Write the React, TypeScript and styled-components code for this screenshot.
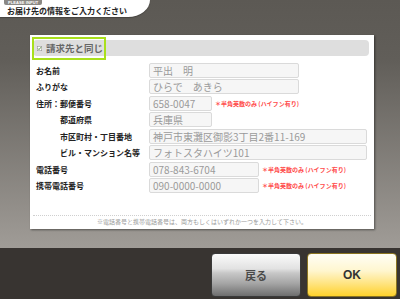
import * as React from "react";
import styled, { createGlobalStyle } from "styled-components";

const GlobalStyle = createGlobalStyle`
  html, body {
    margin: 0;
    padding: 0;
    background: #383431;
  }
  * {
    box-sizing: border-box;
  }
`;

const jp = `"Noto Sans CJK JP", "Noto Sans", "DejaVu Sans", sans-serif`;

const Screen = styled.div`
  width: 400px;
  height: 299px;
  overflow: hidden;
  display: flex;
  flex-direction: column;
  font-family: ${jp};
  background: linear-gradient(to bottom, #5c5954 0px, #615e59 60px, #a09c97 248px, #a09c97 100%);
`;

const Header = styled.div`
  height: 17px;
  display: flex;
`;

const Tab = styled.div`
  width: 150px;
  height: 17px;
  background: #fff;
  border-bottom-right-radius: 22px 17px;
  padding-left: 7px;
  display: flex;
  flex-direction: column;
  box-shadow: 0 1px 1px rgba(0, 0, 0, 0.25);
`;

const Tag = styled.div`
  align-self: flex-start;
  height: 5px;
  padding: 0 4px;
  margin-left: -3px;
  background: #8a8884;
  border-radius: 0 0 2px 2px;
  color: #fff;
  font-size: 4px;
  line-height: 5px;
  font-weight: 700;
  font-family: "Liberation Sans", sans-serif;
  letter-spacing: 0.1px;
`;

const Title = styled.div`
  font-size: 8px;
  line-height: 10px;
  font-weight: 700;
  color: #222;
  margin-top: 1px;
`;

const Main = styled.div`
  flex: 1;
  padding: 18px 26px 19px 30px;
  display: flex;
`;

const Panel = styled.div`
  flex: 1;
  background: #fff;
  display: flex;
  flex-direction: column;
  box-shadow: 1px 1px 2px rgba(0, 0, 0, 0.45);
`;

const SameBar = styled.div`
  margin: 5px 5px 0 3px;
  height: 16px;
  background: #dedede;
  border-radius: 4px;
  padding-left: 2px;
  display: flex;
  align-items: center;
`;

const SameLabel = styled.label`
  width: 68px;
  height: 17px;
  display: flex;
  align-items: center;
  gap: 4px;
  padding-left: 2px;
  outline: 2px solid #a9e01c;
  outline-offset: 1px;
  color: #666;
  font-size: 9.5px;
  font-weight: 700;
`;

const Form = styled.div`
  margin-top: 7px;
  padding-left: 6px;
  display: flex;
  flex-direction: column;
  gap: 1.43px;
`;

const Row = styled.div`
  height: 15px;
  display: flex;
  align-items: center;
`;

const Label = styled.div<{ $indent?: boolean }>`
  width: 113px;
  padding-left: ${(p) => (p.$indent ? "24px" : "0")};
  font-size: 8px;
  font-weight: 700;
  color: #222;
  white-space: nowrap;
`;

const Field = styled.div<{ $w: number }>`
  width: ${(p) => p.$w}px;
  height: 15px;
  border: 1px solid #dadada;
  background: #f6f6f6;
  border-radius: 2px;
  padding-left: 3px;
  font-size: 10px;
  line-height: 13px;
  color: #9a9a9a;
  white-space: nowrap;
  overflow: hidden;
`;

const Hint = styled.div`
  margin-left: 3px;
  font-size: 6px;
  font-weight: 700;
  color: #ff4b4b;
  white-space: nowrap;
`;

const Footer = styled.div`
  margin: auto 3px 0;
  border-top: 1px dotted #cfcfcf;
  padding: 1px 0 3px;
  text-align: center;
  font-size: 6px;
  line-height: 9px;
  color: #9a9a9a;
`;

const BottomBar = styled.div`
  height: 51px;
  background: #383431;
  display: flex;
  justify-content: flex-end;
  gap: 6px;
  padding: 5px 3px 0 0;
`;

const Button = styled.div<{ $primary?: boolean }>`
  width: 90px;
  height: 44px;
  border-radius: 4px;
  border: 1px solid ${(p) => (p.$primary ? "#8a7420" : "#3a3a3a")};
  display: flex;
  align-items: center;
  justify-content: center;
  font-weight: 700;
  font-size: ${(p) => (p.$primary ? "12px" : "11px")};
  font-family: ${(p) => (p.$primary ? `"Liberation Sans", sans-serif` : jp)};
  color: ${(p) => (p.$primary ? "#333" : "#4a4a4a")};
  background: ${(p) =>
    p.$primary
      ? "linear-gradient(to bottom, #fffef6 0%, #fff6cf 40%, #ffe481 70%, #ffd22c 100%)"
      : "linear-gradient(to bottom, #fafafa 0%, #e2e2e2 35%, #c8c8c8 45%, #a5a5a5 70%, #6e6e6e 100%)"};
`;

const CheckIcon = () => (
  <svg width="5" height="5" viewBox="0 0 5 5">
    <rect x="0.25" y="0.25" width="4.5" height="4.5" fill="#fff" stroke="#888" strokeWidth="0.5" />
    <path d="M1 2.5 L2 3.6 L4 1.2" fill="none" stroke="#3a7a20" strokeWidth="0.8" />
  </svg>
);

const App = () => {
  return (
    <Screen>
      <GlobalStyle />
      <Header>
        <Tab>
          <Tag>PLEASE INPUT</Tag>
          <Title>お届け先の情報をご入力ください</Title>
        </Tab>
      </Header>
      <Main>
        <Panel>
          <SameBar>
            <SameLabel>
              <CheckIcon />
              請求先と同じ
            </SameLabel>
          </SameBar>
          <Form>
            <Row>
              <Label>お名前</Label>
              <Field $w={150}>平出　明</Field>
            </Row>
            <Row>
              <Label>ふりがな</Label>
              <Field $w={150}>ひらで　あきら</Field>
            </Row>
            <Row>
              <Label>住所：郵便番号</Label>
              <Field $w={63}>658-0047</Field>
              <Hint>＊半角英数のみ (ハイフン有り)</Hint>
            </Row>
            <Row>
              <Label $indent>都道府県</Label>
              <Field $w={63}>兵庫県</Field>
            </Row>
            <Row>
              <Label $indent>市区町村・丁目番地</Label>
              <Field $w={218}>神戸市東灘区御影3丁目2番11-169</Field>
            </Row>
            <Row>
              <Label $indent>ビル・マンション名等</Label>
              <Field $w={218}>フォトスタハイツ101</Field>
            </Row>
            <Row>
              <Label>電話番号</Label>
              <Field $w={110}>078-843-6704</Field>
              <Hint>＊半角英数のみ (ハイフン有り)</Hint>
            </Row>
            <Row>
              <Label>携帯電話番号</Label>
              <Field $w={110}>090-0000-0000</Field>
              <Hint>＊半角英数のみ (ハイフン有り)</Hint>
            </Row>
          </Form>
          <Footer>
            ※電話番号と携帯電話番号は、両方もしくはいずれか一つを入力して下さい。
          </Footer>
        </Panel>
      </Main>
      <BottomBar>
        <Button>戻る</Button>
        <Button $primary>OK</Button>
      </BottomBar>
    </Screen>
  );
};

export default App;
